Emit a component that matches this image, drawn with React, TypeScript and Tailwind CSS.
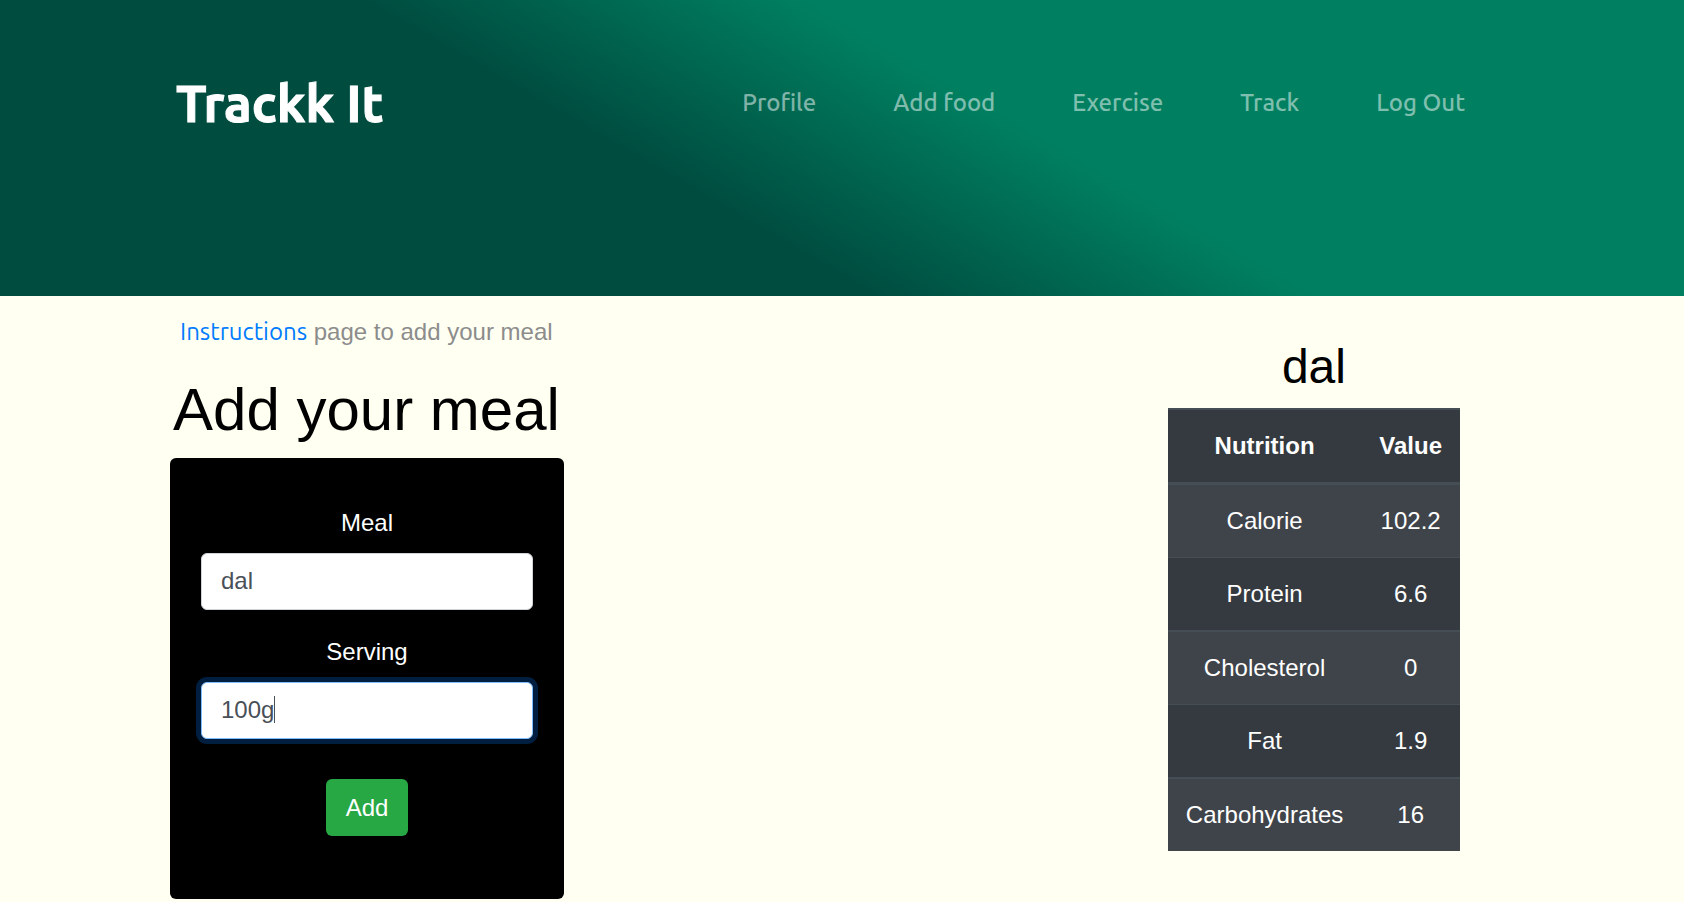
import { useState } from "react";

const links = ["Profile", "Add food", "Exercise", "Track", "Log Out"];

const nutrition = [
  { name: "Calorie", value: "102.2" },
  { name: "Protein", value: "6.6" },
  { name: "Cholesterol", value: "0" },
  { name: "Fat", value: "1.9" },
  { name: "Carbohydrates", value: "16" },
];

function Header() {
  return (
    <header className="bg-[linear-gradient(30deg,#004d40_40%,#008060_60%)] pt-[67px] pb-[157px] font-[Ubuntu,'Noto_Sans',sans-serif]">
      <div className="mx-auto flex max-w-[1440px] items-center justify-between pr-[97px] pl-[54px]">
        <a href="#" className="text-[51px] leading-[72px] font-bold text-white [-webkit-text-stroke:1px_#ffffff]">
          Trackk It
        </a>
        <nav>
          <ul className="flex gap-[77px]">
            {links.map((link) => (
              <li key={link}>
                <a href="#" className="block text-2xl leading-9 font-medium text-white/50">
                  {link}
                </a>
              </li>
            ))}
          </ul>
        </nav>
      </div>
    </header>
  );
}

function MealForm() {
  const [meal, setMeal] = useState("dal");
  const [serving, setServing] = useState("100g");
  return (
    <form
      onSubmit={(event) => event.preventDefault()}
      className="flex flex-col items-center rounded-md bg-black px-[31px] pt-[47px] pb-[63px] text-white"
    >
      <label htmlFor="meal" className="mb-3">
        Meal
      </label>
      <input
        id="meal"
        type="text"
        value={meal}
        onChange={(event) => setMeal(event.target.value)}
        className="mb-6 h-[57px] w-full rounded-md border border-[#ced4da] bg-white px-[19px] pb-[2px] text-[#495057] outline-none"
      />
      <label htmlFor="serving" className="mb-3">
        Serving
      </label>
      <div className="relative mb-10 w-full">
        <input
          id="serving"
          type="text"
          value={serving}
          onChange={(event) => setServing(event.target.value)}
          className="block h-[57px] w-full rounded-md border border-[#80bdff] bg-white px-[19px] pb-[2px] text-[#495057] caret-transparent shadow-[0_0_0_5px_#001f40] outline-none"
        />
        <span className="absolute top-[14px] left-[73px] h-[27px] w-px bg-[#495057]" />
      </div>
      <button type="submit" className="h-[57px] rounded-md bg-[#28a745] px-5">
        Add
      </button>
    </form>
  );
}

function NutritionTable() {
  return (
    <section className="pt-6 text-center">
      <h2 className="mb-3 text-5xl leading-[58px]">dal</h2>
      <table className="w-[292px] border-separate border-spacing-0 bg-[#343a40] text-white">
        <thead>
          <tr>
            <th className="border-t-2 border-b-3 border-[#454d55] p-[18px] font-bold">Nutrition</th>
            <th className="border-t-2 border-b-3 border-[#454d55] p-[18px] font-bold">Value</th>
          </tr>
        </thead>
        <tbody>
          {nutrition.map((row) => (
            <tr key={row.name} className="group odd:bg-[#3f444a]">
              <td className="border-[#454d55] p-[18px] group-even:border-y group-even:border-b-2">
                {row.name}
              </td>
              <td className="border-[#454d55] p-[18px] group-even:border-y group-even:border-b-2">
                {row.value}
              </td>
            </tr>
          ))}
        </tbody>
      </table>
    </section>
  );
}

export default function App() {
  return (
    <div className="min-h-screen bg-[#fffff2] font-['Liberation_Sans',Arial,sans-serif] text-2xl leading-9 text-black">
      <Header />
      <main className="mx-auto flex max-w-[1440px] items-start justify-between pt-[18px] pr-[102px] pl-12">
        <section className="w-[394px]">
          <p className="pl-[10px] whitespace-nowrap text-[#8c8c8c]">
            <a href="#" className="font-[Ubuntu,'Noto_Sans',sans-serif] text-2xl leading-9 text-[#007bff]">
              Instructions
            </a>{" "}
            page to add your meal
          </p>
          <h1 className="mt-6 mb-3 pl-[3px] text-6xl leading-[72px] whitespace-nowrap">Add your meal</h1>
          <MealForm />
        </section>
        <NutritionTable />
      </main>
    </div>
  );
}
